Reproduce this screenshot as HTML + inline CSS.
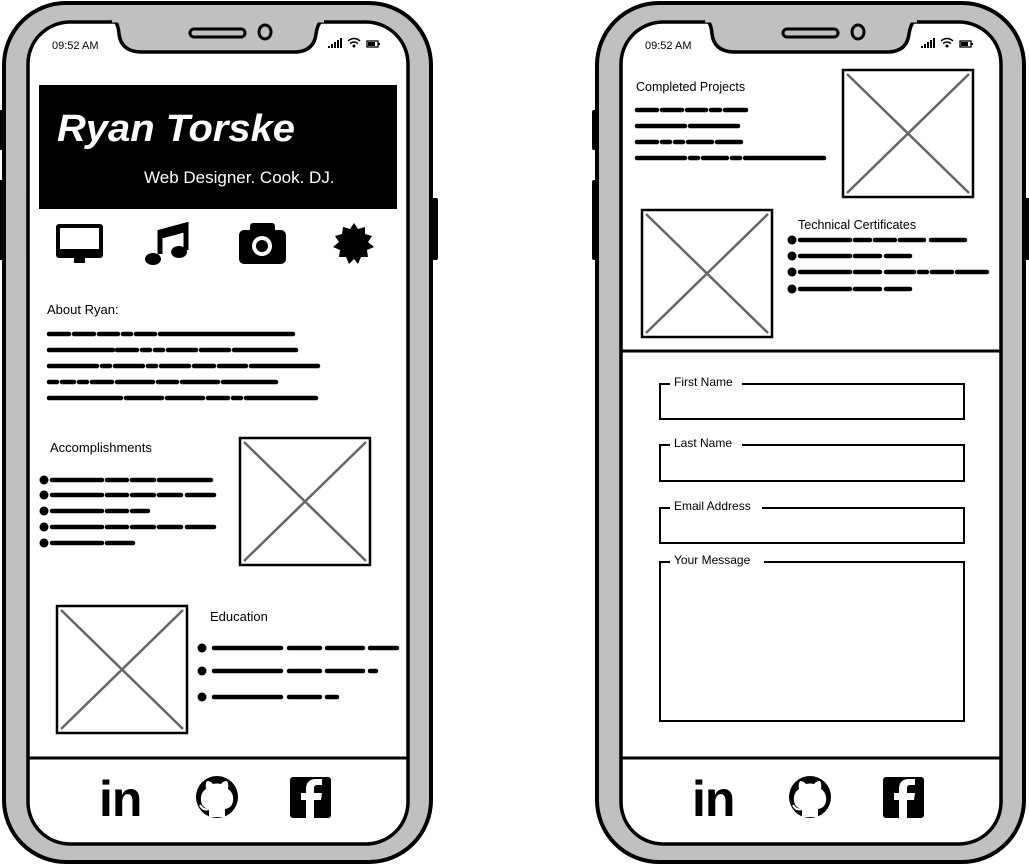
<!DOCTYPE html>
<html><head><meta charset="utf-8"><style>
html,body{margin:0;padding:0;background:#fff;width:1029px;height:867px;overflow:hidden}
text{font-family:"Liberation Sans",sans-serif}
.sc{stroke:#000;stroke-width:4.5;stroke-linecap:round;fill:none}
.lbl{font-size:13px;fill:#000}
</style></head><body>
<svg width="1029" height="867" viewBox="0 0 1029 867" xmlns="http://www.w3.org/2000/svg">
<defs>
<g id="phone">
  <rect x="-1" y="110" width="8" height="40" rx="2" fill="#000"/>
  <rect x="-1" y="180" width="8" height="80" rx="2" fill="#000"/>
  <rect x="430" y="198" width="8" height="62" rx="2" fill="#000"/>
  <rect x="4" y="3" width="427" height="859" rx="62" fill="#c0c0c0" stroke="#000" stroke-width="4"/>
  <rect x="28" y="22" width="380" height="822" rx="42" fill="#fff" stroke="#000" stroke-width="3.5"/>
  <path d="M112 20 Q118 21 119 34 Q121 51 140 52 L296 52 Q314 51 316 34 Q318 21 324 20 Z" fill="#c0c0c0" stroke="#000" stroke-width="3.5"/>
  <path d="M112 20 L324 20" stroke="#c0c0c0" stroke-width="5"/>
  <rect x="190" y="29" width="55" height="8" rx="4" fill="none" stroke="#000" stroke-width="3"/>
  <ellipse cx="265" cy="32" rx="6" ry="7" fill="none" stroke="#000" stroke-width="3"/>
  <text x="52" y="49" style="font-size:11px">09:52 AM</text>
  <g fill="#000"><rect x="328" y="46" width="2" height="2"/><rect x="331" y="44" width="2" height="4"/><rect x="334" y="42" width="2" height="6"/><rect x="337" y="40" width="2" height="8"/><rect x="340" y="38" width="2" height="10"/></g>
  <path d="M348 41 Q354 36 360 41 M350 43.5 Q354 40.5 358 43.5" stroke="#000" stroke-width="1.5" fill="none"/><circle cx="354" cy="46" r="1.5"/>
  <rect x="367" y="41" width="11" height="6" fill="none" stroke="#000" stroke-width="1.3"/><rect x="368" y="42" width="7" height="4"/><rect x="378" y="43" width="2" height="2"/>
  <line x1="28" y1="758" x2="408" y2="758" stroke="#000" stroke-width="3"/>
  <text x="99" y="816" style="font-size:50px;font-weight:bold;letter-spacing:-1px">in</text>
  <circle cx="217" cy="797" r="21" fill="#000"/>
  <path d="M209 817 L209 809 Q202 808 201 801 Q200 793 206 789 Q205 784 207 781 Q211 781 213 784 Q217 783 221 784 Q223 781 227 781 Q229 784 228 789 Q234 793 233 801 Q232 808 225 809 L225 817 Z" fill="#fff"/>
  <path d="M209 809 Q203 811 200 805" stroke="#fff" stroke-width="2" fill="none"/>
  <rect x="290" y="777" width="41" height="41" rx="3" fill="#000"/>
  <path d="M314 818 L314 800 L321 800 L322 793 L314 793 L314 788 Q314 785 317 785 L322 785 L322 779 L316 779 Q306 779 306 789 L306 793 L301 793 L301 800 L306 800 L306 818 Z" fill="#fff"/>
</g>
<g id="img"><rect x="0" y="0" width="130" height="127" fill="#fff" stroke="#000" stroke-width="2.5"/><path d="M4 4 L126 123 M126 4 L4 123" stroke="#666" stroke-width="2.5"/></g>
</defs>

<use href="#phone"/>
<use href="#phone" x="593"/>

<!-- LEFT PHONE CONTENT -->
<rect x="39" y="85" width="358" height="124" fill="#000"/>
<text x="57" y="141" fill="#fff" textLength="238" lengthAdjust="spacingAndGlyphs" style="font-size:38px;font-weight:bold;font-style:italic">Ryan Torske</text>
<text x="144" y="183" fill="#fff" style="font-size:17px">Web Designer. Cook. DJ.</text>

<rect x="56" y="224" width="47" height="34" rx="3" fill="#000"/><rect x="60" y="228" width="39" height="21" fill="#fff"/><rect x="74" y="257" width="11" height="6" fill="#000"/>
<path d="M160 254 L160 232 L186 225 L186 250" stroke="#000" stroke-width="5" fill="none"/><path d="M160 233 L186 226 L186 232 L160 239Z" fill="#000"/>
<ellipse cx="153" cy="259" rx="8" ry="6" fill="#000"/><ellipse cx="179" cy="252" rx="8" ry="6" fill="#000"/>
<rect x="239" y="230" width="47" height="34" rx="5" fill="#000"/><rect x="250" y="223" width="25" height="10" rx="3" fill="#000"/><circle cx="262" cy="246" r="10" fill="#fff"/><circle cx="262" cy="246" r="6" fill="#000"/>
<polygon fill="#000" points="354,223 358,229 365,227 365,234 372,236 368,242 374,247 367,250 368,257 361,257 358,264 354,259 349,264 346,257 339,257 340,250 333,247 339,242 335,236 342,234 343,227 350,229"/>

<text x="47" y="314" class="lbl">About Ryan:</text>
<path class="sc" d="M49 334h20M74 334h20M99 334h19M123 334h8M136 334h19M160 334h133
M49 350h64M117 350h20M142 350h8M155 350h8M168 350h28M201 350h28M234 350h62
M49 366h48M102 366h8M115 366h28M148 366h8M161 366h28M194 366h20M219 366h27M251 366h67
M49 382h8M62 382h12M79 382h8M92 382h20M117 382h36M158 382h19M182 382h36M223 382h53
M49 398h72M126 398h36M167 398h36M208 398h20M233 398h8M246 398h70"/>

<text x="50" y="452" class="lbl">Accomplishments</text>
<use href="#img" x="240" y="438"/>
<g fill="#000"><circle cx="44" cy="480" r="4.5"/><circle cx="44" cy="495" r="4.5"/><circle cx="44" cy="511" r="4.5"/><circle cx="44" cy="527" r="4.5"/><circle cx="44" cy="543" r="4.5"/></g>
<path class="sc" d="M52 480h50M107 480h20M132 480h22M159 480h52
M52 495h50M107 495h20M132 495h22M159 495h22M187 495h27
M52 511h50M107 511h20M132 511h16
M52 527h50M107 527h20M132 527h22M187 527h27M159 527h22
M52 543h50M107 543h26"/>

<use href="#img" x="57" y="606"/>
<text x="210" y="621" class="lbl">Education</text>
<g fill="#000"><circle cx="202" cy="648" r="4.5"/><circle cx="202" cy="671" r="4.5"/><circle cx="202" cy="697" r="4.5"/></g>
<path class="sc" d="M214 648h67M289 648h31M327 648h36M370 648h27
M214 671h67M289 671h31M327 671h36M370 671h6
M214 697h67M289 697h31M327 697h10"/>

<!-- RIGHT PHONE CONTENT -->
<text x="636" y="91" class="lbl" style="font-size:12.5px">Completed Projects</text>
<path class="sc" d="M637 110h20M662 110h20M687 110h19M711 110h9M725 110h21
M637 126h48M690 126h48
M637 142h20M662 142h8M675 142h8M688 142h24M717 142h24
M637 158h48M690 158h8M703 158h24M732 158h8M745 158h79"/>
<use href="#img" x="843" y="70"/>
<use href="#img" x="642" y="210"/>
<text x="798" y="229" class="lbl" style="font-size:12.5px">Technical Certificates</text>
<g fill="#000"><circle cx="792" cy="240" r="4.5"/><circle cx="792" cy="256" r="4.5"/><circle cx="792" cy="272" r="4.5"/><circle cx="792" cy="289" r="4.5"/></g>
<path class="sc" d="M800 240h50M875 240h20M900 240h24M931 240h34M855 240h15
M800 256h50M855 256h25M886 256h24
M800 272h50M855 272h25M886 272h28M919 272h8M932 272h20M957 272h30
M800 289h50M855 289h25M886 289h24"/>
<line x1="621" y1="351" x2="1000" y2="351" stroke="#000" stroke-width="3"/>

<g fill="none" stroke="#000" stroke-width="2">
<rect x="660" y="384" width="304" height="35"/>
<rect x="660" y="445" width="304" height="36"/>
<rect x="660" y="508" width="304" height="35"/>
<rect x="660" y="562" width="304" height="159"/>
</g>
<g fill="#fff"><rect x="670" y="378" width="72" height="12"/><rect x="670" y="439" width="72" height="12"/><rect x="670" y="502" width="92" height="12"/><rect x="670" y="556" width="94" height="12"/></g>
<g class="lbl" style="font-size:12px">
<text x="674" y="386">First Name</text>
<text x="674" y="447">Last Name</text>
<text x="674" y="510">Email Address</text>
<text x="674" y="564">Your Message</text>
</g>
</svg>
</body></html>
